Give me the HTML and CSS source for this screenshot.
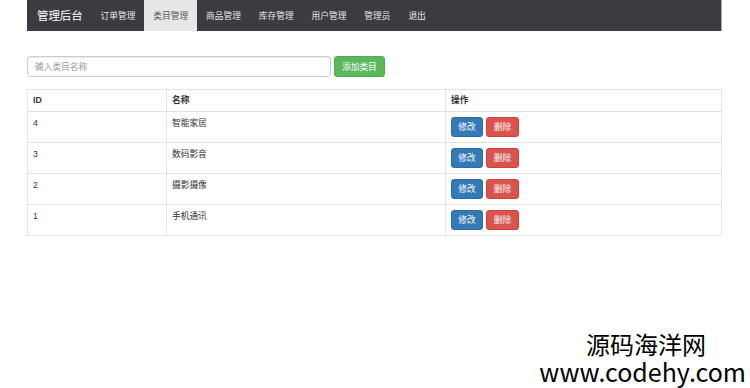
FILE: index.html
```html
<!DOCTYPE html>
<html lang="zh-CN">
<head>
  <meta charset="UTF-8" />
  <meta name="viewport" content="width=device-width, initial-scale=1.0" />
  <title>管理后台 - 类目管理</title>
  <link rel="stylesheet" href="styles.css">
</head>
<body>
  <div class="container">
    <nav class="navbar">
      <a class="brand" href="#">管理后台</a>
      <a class="nav-item" href="#">订单管理</a>
      <a class="nav-item active" href="#">类目管理</a>
      <a class="nav-item" href="#">商品管理</a>
      <a class="nav-item" href="#">库存管理</a>
      <a class="nav-item" href="#">用户管理</a>
      <a class="nav-item" href="#">管理员</a>
      <a class="nav-item" href="#">退出</a>
    </nav>

    <form class="add-form">
      <input type="text" class="form-input" placeholder="输入类目名称" />
      <button type="button" class="btn btn-success">添加类目</button>
    </form>

    <table class="table">
      <thead>
        <tr>
          <th class="col-id">ID</th>
          <th class="col-name">名称</th>
          <th>操作</th>
        </tr>
      </thead>
      <tbody>
        <tr>
          <td>4</td>
          <td>智能家居</td>
          <td class="actions"><button class="btn btn-primary">修改</button><button class="btn btn-danger">删除</button></td>
        </tr>
        <tr>
          <td>3</td>
          <td>数码影音</td>
          <td class="actions"><button class="btn btn-primary">修改</button><button class="btn btn-danger">删除</button></td>
        </tr>
        <tr>
          <td>2</td>
          <td>摄影摄像</td>
          <td class="actions"><button class="btn btn-primary">修改</button><button class="btn btn-danger">删除</button></td>
        </tr>
        <tr>
          <td>1</td>
          <td>手机通讯</td>
          <td class="actions"><button class="btn btn-primary">修改</button><button class="btn btn-danger">删除</button></td>
        </tr>
      </tbody>
    </table>
  </div>

  <div class="watermark">
    <div class="wm-name">源码海洋网</div>
    <div class="wm-url">www.codehy.com</div>
  </div>
</body>
</html>
```

FILE: styles.css
```css
body {
  margin: 0;
  font-family: "Liberation Sans", "Noto Sans CJK SC", sans-serif;
  font-size: 8.7px;
  line-height: 12px;
  color: #333;
  background: #fff;
}
.container {
  width: 695px;
  margin-left: 27px;
}
.navbar {
  display: flex;
  align-items: stretch;
  height: 31px;
  background: #3c3b40;
  border-right: 1px solid #a8a8a8;
  box-sizing: border-box;
}
.navbar a {
  text-decoration: none;
  display: flex;
  align-items: center;
}
.brand {
  color: #fff;
  font-size: 11.4px;
  padding: 0 9px 0 10px;
}
.nav-item {
  color: #e8e8e8;
  padding: 0 9px;
}
.nav-item.active {
  background: #e7e7e7;
  color: #555;
}
.add-form {
  display: flex;
  gap: 3px;
  margin: 25px 0 12px;
}
.form-input {
  width: 304px;
  height: 21px;
  box-sizing: border-box;
  border: 1px solid #ccc;
  border-radius: 3px;
  padding: 0 7px;
  font-family: inherit;
  font-size: 8.7px;
  color: #555;
  box-shadow: inset 0 1px 1px rgba(0, 0, 0, 0.075);
}
.form-input::placeholder {
  color: #999;
}
.btn {
  font-family: inherit;
  font-size: 8.7px;
  line-height: 12px;
  color: #fff;
  border: 1px solid transparent;
  border-radius: 3px;
  padding: 3px 6px;
  cursor: pointer;
  box-sizing: border-box;
}
.btn-success {
  background: #5cb85c;
  border-color: #4cae4c;
  height: 21px;
  padding: 0 7px;
}
.btn-primary {
  background: #337ab7;
  border-color: #2e6da4;
  width: 32px;
  height: 20px;
}
.btn-danger {
  background: #d9534f;
  border-color: #d43f3a;
  width: 33px;
  height: 20px;
}
.table {
  width: 100%;
  border-collapse: collapse;
  border: 1px solid #e4e4e4;
}
.table th,
.table td {
  text-align: left;
  vertical-align: top;
  border: 1px solid #e4e4e4;
  padding: 5px 5px;
}
.table th {
  font-weight: bold;
  line-height: 11px;
  border-bottom: 1px solid #e0e0e0;
}
.table td {
  height: 20px;
}
.actions .btn + .btn {
  margin-left: 3px;
}
.col-id {
  width: 128px;
}
.col-name {
  width: 268px;
}
.watermark {
  position: absolute;
  right: 4px;
  top: 329px;
  text-align: right;
  font-family: "Noto Sans CJK SC", "DejaVu Sans", sans-serif;
  color: #000;
}
.wm-name {
  font-size: 24px;
  line-height: 30px;
  margin-right: 40px;
}
.wm-url {
  font-size: 25px;
  line-height: 24px;
}
```
